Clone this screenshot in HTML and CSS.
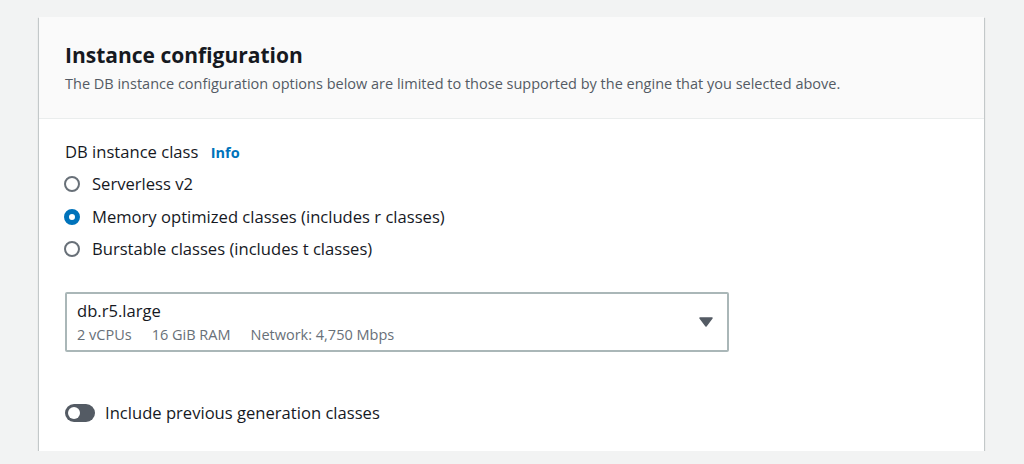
FILE: index.html
```html
<!DOCTYPE html>
<html>
<head>
    <link rel="stylesheet" href="styles.css">
</head>
<body>
    <div class="panel">
        <div class="panel-header">
            <h2>Instance configuration</h2>
            <p class="desc">The DB instance configuration options below are limited to those supported by the engine that you selected above.</p>
        </div>

        <div class="panel-body">
            <div class="field-label">DB instance class <a class="info" href="#">Info</a></div>

            <div class="radio-group">
                <label class="radio"><span class="dot"></span>Serverless v2</label>
                <label class="radio"><span class="dot checked"></span>Memory optimized classes (includes r classes)</label>
                <label class="radio"><span class="dot"></span>Burstable classes (includes t classes)</label>
            </div>

            <div class="select">
                <div class="select-text">
                    <div class="select-value">db.r5.large</div>
                    <div class="select-tags">
                        <span>2 vCPUs</span>
                        <span>16 GiB RAM</span>
                        <span>Network: 4,750 Mbps</span>
                    </div>
                </div>
                <svg class="caret" width="14" height="10" viewBox="0 0 14 10">
                    <path d="M1 1 L13 1 L7 9 Z" fill="#545b64" stroke="#545b64" stroke-width="1.5" stroke-linejoin="round"/>
                </svg>
            </div>

            <label class="toggle-row">
                <span class="toggle"><span class="knob"></span></span>
                Include previous generation classes
            </label>
        </div>
    </div>
</body>
</html>
```

FILE: styles.css
```css
body {
    margin: 0;
    background: #f2f3f3;
    font-family: "Open Sans", Arial, sans-serif;
    color: #16191f;
}
.panel {
    width: 945px;
    margin: 17px 0 0 39px;
    background: white;
    box-shadow: 0 1px 1px 0 rgba(0, 28, 36, 0.3), 1px 1px 1px 0 rgba(0, 28, 36, 0.15), -1px 1px 1px 0 rgba(0, 28, 36, 0.15);
}
.panel-header {
    background: #fafafa;
    border-bottom: 1px solid #eaeded;
    padding: 23px 26px 24px 26px;
}
h2 {
    margin: 0;
    font-size: 21px;
    font-weight: 700;
    line-height: 30px;
}
.desc {
    margin: 4px 0 0 0;
    font-size: 14.5px;
    color: #545b64;
    line-height: 20px;
}
.panel-body {
    padding: 21px 26px 26px 26px;
}
.field-label {
    font-size: 16.6px;
    line-height: 24px;
}
.info {
    color: #0073bb;
    font-weight: 700;
    font-size: 14.5px;
    text-decoration: none;
    margin-left: 8px;
}
.radio-group {
    display: flex;
    flex-direction: column;
    gap: 8.5px;
    margin-top: 7px;
}
.radio {
    display: flex;
    align-items: center;
    font-size: 16.6px;
    line-height: 24px;
}
.dot {
    width: 12px;
    height: 12px;
    border: 2px solid #687078;
    border-radius: 50%;
    margin-right: 12px;
    margin-left: -1px;
    box-sizing: content-box;
    background: white;
}
.dot.checked {
    border: 5px solid #0073bb;
    width: 6px;
    height: 6px;
}
.select {
    width: 640px;
    margin-top: 31px;
    border: 2px solid #aab7b8;
    border-radius: 2px;
    padding: 5px 10px 5px 10px;
    display: flex;
    align-items: center;
    justify-content: space-between;
}
.select-value {
    font-size: 16.6px;
    line-height: 24px;
}
.select-tags {
    font-size: 14.5px;
    color: #687078;
    line-height: 20px;
    margin-top: 2px;
    display: flex;
    gap: 20px;
}
.caret {
    margin-right: 4px;
}
.toggle-row {
    display: flex;
    align-items: center;
    margin-top: 49px;
    font-size: 16.6px;
    line-height: 24px;
}
.toggle {
    width: 30px;
    height: 18px;
    border-radius: 9px;
    background: #545b64;
    margin-right: 10px;
    display: flex;
    align-items: center;
    padding-left: 3px;
    box-sizing: border-box;
}
.knob {
    width: 12px;
    height: 12px;
    border-radius: 50%;
    background: white;
}
```
